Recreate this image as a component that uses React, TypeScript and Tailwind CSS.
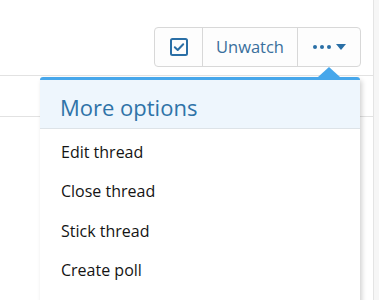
import React from 'react';

const items = ['Edit thread', 'Close thread', 'Stick thread', 'Create poll'];

function CheckIcon() {
  return (
    <svg width="18" height="18" viewBox="0 0 18 18" fill="none">
      <rect x="1" y="1" width="16" height="16" rx="1.5" stroke="#2a6fa6" strokeWidth="2" />
      <path d="M4.8 9.3 L7.7 12 L13.2 6.2" stroke="#2a6fa6" strokeWidth="2" strokeLinecap="round" strokeLinejoin="round" />
    </svg>
  );
}

export default function App() {
  return (
    <div className="relative flex w-[379px] h-[300px] overflow-hidden bg-white" style={{ fontFamily: '"Open Sans", "Noto Sans", sans-serif' }}>
      <div className="flex-1 flex flex-col border-r border-[#e4e4e4]">
        <div className="flex justify-end pt-[27px] pr-[12px]">
          <div className="flex h-[40px] rounded-[4px] border border-[#d8d8d8] bg-[#fdfdfd] text-[#3a6f9c]">
            <button className="flex w-[48px] items-center justify-center border-r border-[#d8d8d8]">
              <CheckIcon />
            </button>
            <button className="flex w-[95px] items-center justify-center border-r border-[#d8d8d8] text-[16.5px]">
              Unwatch
            </button>
            <button className="flex w-[62px] items-center justify-center gap-[5px]">
              <span className="flex gap-[3px]">
                <span className="h-[4px] w-[4px] rounded-full bg-[#2a6fa6]" />
                <span className="h-[4px] w-[4px] rounded-full bg-[#2a6fa6]" />
                <span className="h-[4px] w-[4px] rounded-full bg-[#2a6fa6]" />
              </span>
              <svg width="10" height="6" viewBox="0 0 10 6"><path d="M0 0 H10 L5 6 Z" fill="#2a6fa6" /></svg>
            </button>
          </div>
        </div>
        <div className="mt-[8px] h-[42px] border-t border-b border-[#e2e2e2]" />
      </div>
      <div className="w-[5px] bg-[#f6f6f6]" />

      <div className="absolute left-[40px] top-[67px] w-[320px]">
        <div className="absolute right-[20px] top-0 h-0 w-0 border-x-[11px] border-b-[10px] border-x-transparent border-b-[#47a7eb]" />
        <div className="mt-[10px] rounded-t-[3px] border-t-[3px] border-[#47a7eb] bg-white shadow-[2px_3px_5px_rgba(0,0,0,0.18)]">
          <div className="flex h-[49px] items-center border-b border-[#dde3e8] bg-[#eef6fd] pl-[20px] pt-[6px] text-[22px] text-[#2f73a8]">
            More options
          </div>
          <div className="flex flex-col pt-[3px] pb-[20px]">
            {items.map(t => (
              <div key={t} className="flex h-[39.5px] items-center pl-[21px] text-[16px] text-[#141414]">
                {t}
              </div>
            ))}
          </div>
        </div>
      </div>
    </div>
  );
}
